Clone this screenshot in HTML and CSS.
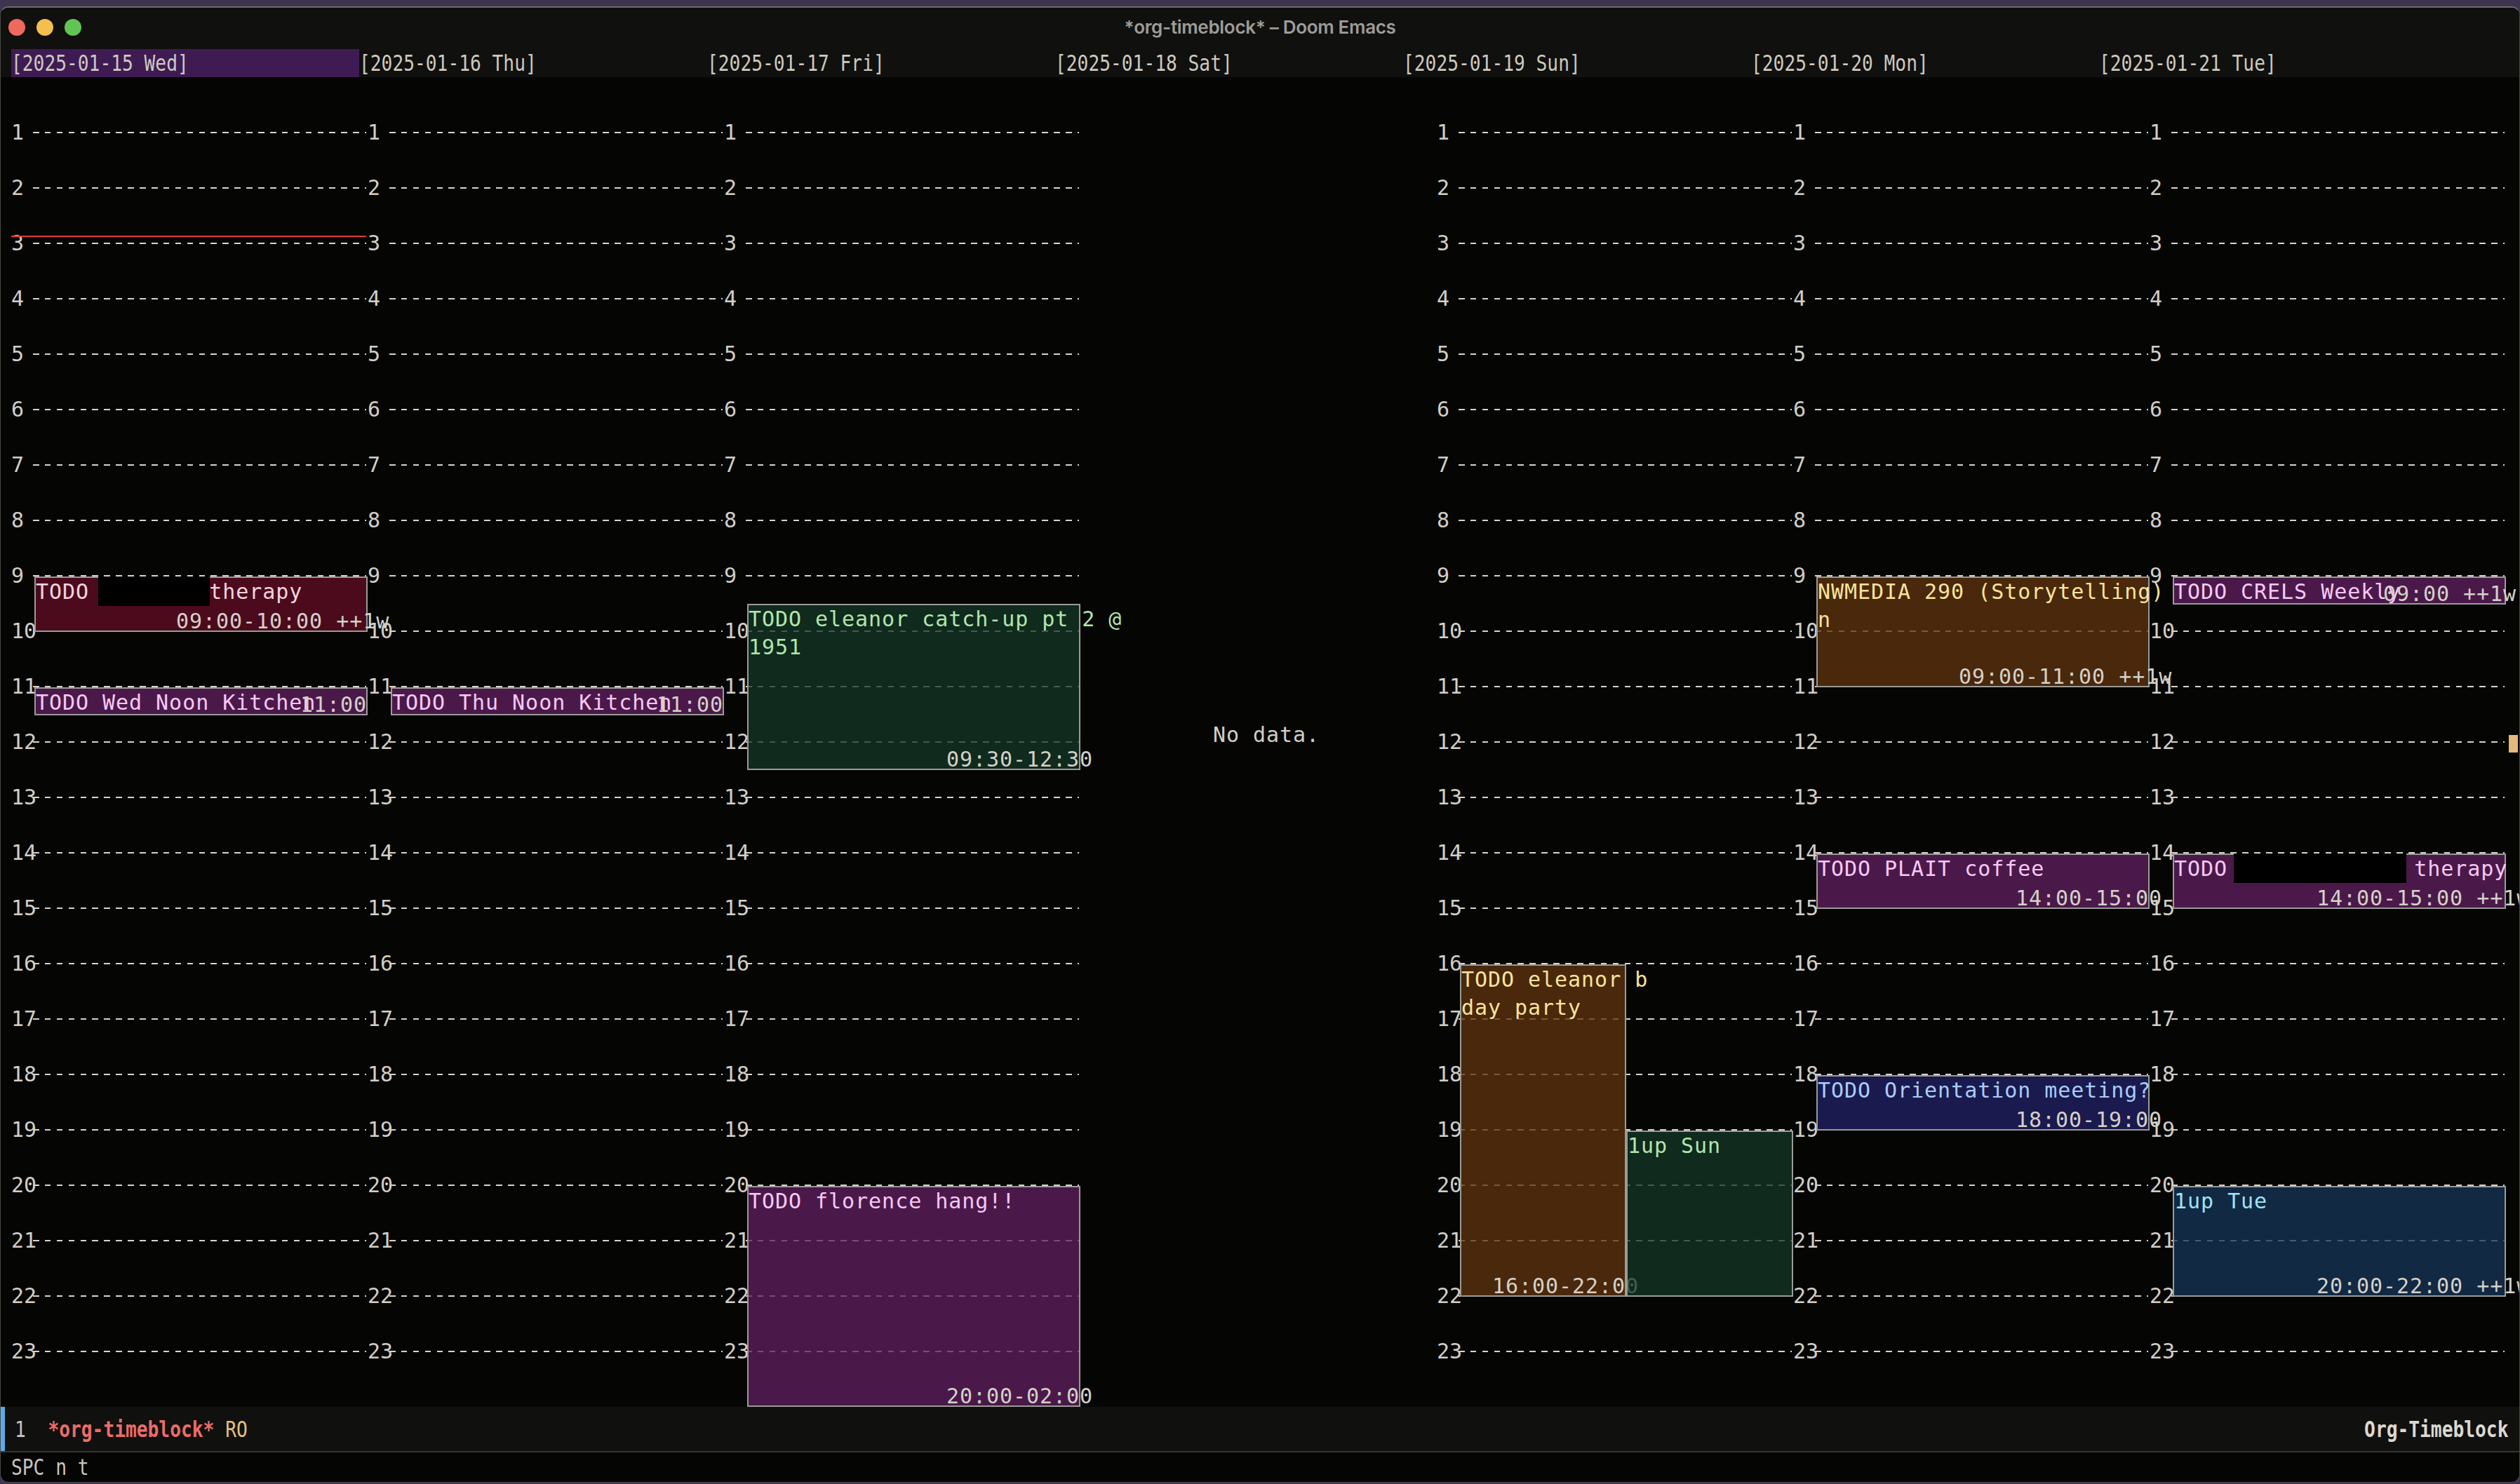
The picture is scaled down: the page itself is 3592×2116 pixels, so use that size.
FILE: index.html
```html
<!DOCTYPE html>
<html lang="en">
<head>
<meta charset="utf-8">
<title>*org-timeblock* – Doom Emacs</title>
<link rel="stylesheet" href="styles.css">
</head>
<body>
<div class="window">
  <div class="titlebar">
    <div class="lights"><span class="dot red"></span><span class="dot yellow"></span><span class="dot green"></span></div>
    <div class="title">*org-timeblock* – Doom Emacs</div>
    <div></div>
  </div>
  <div class="headerline">
    <div class="hd on"><span class="cx">[2025-01-15 Wed]</span></div>
    <div class="hd"><span class="cx">[2025-01-16 Thu]</span></div>
    <div class="hd"><span class="cx">[2025-01-17 Fri]</span></div>
    <div class="hd"><span class="cx">[2025-01-18 Sat]</span></div>
    <div class="hd"><span class="cx">[2025-01-19 Sun]</span></div>
    <div class="hd"><span class="cx">[2025-01-20 Mon]</span></div>
    <div class="hd"><span class="cx">[2025-01-21 Tue]</span></div>
  </div>
  <div class="timeblock">
    <section class="day">
      <div class="grid"><div class="hr"></div><div class="hr"><i>1</i></div><div class="hr"><i>2</i></div><div class="hr"><i>3</i></div><div class="hr"><i>4</i></div><div class="hr"><i>5</i></div><div class="hr"><i>6</i></div><div class="hr"><i>7</i></div><div class="hr"><i>8</i></div><div class="hr"><i>9</i></div><div class="hr"><i>10</i></div><div class="hr"><i>11</i></div><div class="hr"><i>12</i></div><div class="hr"><i>13</i></div><div class="hr"><i>14</i></div><div class="hr"><i>15</i></div><div class="hr"><i>16</i></div><div class="hr"><i>17</i></div><div class="hr"><i>18</i></div><div class="hr"><i>19</i></div><div class="hr"><i>20</i></div><div class="hr"><i>21</i></div><div class="hr"><i>22</i></div><div class="hr"><i>23</i></div></div>
      <div class="now"></div>
      <div class="ev crimson" style="top:712px;height:79px"><div class="ttl">TODO         therapy</div><span class="redact" style="left:89px;width:159px"></span><span class="tm" style="left:200px">09:00-10:00 ++1w</span></div>
      <div class="ev purple" style="top:870px;height:40px"><div class="ttl">TODO Wed Noon Kitchen</div><span class="tm" style="left:377px">11:00</span></div>
    </section>
    <section class="day">
      <div class="grid"><div class="hr"></div><div class="hr"><i>1</i></div><div class="hr"><i>2</i></div><div class="hr"><i>3</i></div><div class="hr"><i>4</i></div><div class="hr"><i>5</i></div><div class="hr"><i>6</i></div><div class="hr"><i>7</i></div><div class="hr"><i>8</i></div><div class="hr"><i>9</i></div><div class="hr"><i>10</i></div><div class="hr"><i>11</i></div><div class="hr"><i>12</i></div><div class="hr"><i>13</i></div><div class="hr"><i>14</i></div><div class="hr"><i>15</i></div><div class="hr"><i>16</i></div><div class="hr"><i>17</i></div><div class="hr"><i>18</i></div><div class="hr"><i>19</i></div><div class="hr"><i>20</i></div><div class="hr"><i>21</i></div><div class="hr"><i>22</i></div><div class="hr"><i>23</i></div></div>
      <div class="ev purple" style="top:870px;height:40px"><div class="ttl">TODO Thu Noon Kitchen</div><span class="tm" style="left:377px">11:00</span></div>
    </section>
    <section class="day">
      <div class="grid"><div class="hr"></div><div class="hr"><i>1</i></div><div class="hr"><i>2</i></div><div class="hr"><i>3</i></div><div class="hr"><i>4</i></div><div class="hr"><i>5</i></div><div class="hr"><i>6</i></div><div class="hr"><i>7</i></div><div class="hr"><i>8</i></div><div class="hr"><i>9</i></div><div class="hr"><i>10</i></div><div class="hr"><i>11</i></div><div class="hr"><i>12</i></div><div class="hr"><i>13</i></div><div class="hr"><i>14</i></div><div class="hr"><i>15</i></div><div class="hr"><i>16</i></div><div class="hr"><i>17</i></div><div class="hr"><i>18</i></div><div class="hr"><i>19</i></div><div class="hr"><i>20</i></div><div class="hr"><i>21</i></div><div class="hr"><i>22</i></div><div class="hr"><i>23</i></div></div>
      <div class="ev green" style="top:751px;height:237px"><div class="ttl">TODO eleanor catch-up pt 2 @<br>1951</div><span class="tm" style="left:282px">09:30-12:30</span></div>
      <div class="ev purple" style="top:1581px;height:315px"><div class="ttl">TODO florence hang!!</div><span class="tm" style="left:282px">20:00-02:00</span></div>
    </section>
    <section class="day empty">
      <p class="nodata">No data.</p>
    </section>
    <section class="day">
      <div class="grid"><div class="hr"></div><div class="hr"><i>1</i></div><div class="hr"><i>2</i></div><div class="hr"><i>3</i></div><div class="hr"><i>4</i></div><div class="hr"><i>5</i></div><div class="hr"><i>6</i></div><div class="hr"><i>7</i></div><div class="hr"><i>8</i></div><div class="hr"><i>9</i></div><div class="hr"><i>10</i></div><div class="hr"><i>11</i></div><div class="hr"><i>12</i></div><div class="hr"><i>13</i></div><div class="hr"><i>14</i></div><div class="hr"><i>15</i></div><div class="hr"><i>16</i></div><div class="hr"><i>17</i></div><div class="hr"><i>18</i></div><div class="hr"><i>19</i></div><div class="hr"><i>20</i></div><div class="hr"><i>21</i></div><div class="hr"><i>22</i></div><div class="hr"><i>23</i></div></div>
      <div class="ev brown half" style="top:1265px;height:474px"><div class="ttl">TODO eleanor b<br>day party</div><span class="tm" style="left:44px">16:00-22:00</span></div>
      <div class="ev green half right" style="top:1502px;height:237px"><div class="ttl">1up Sun</div></div>
    </section>
    <section class="day">
      <div class="grid"><div class="hr"></div><div class="hr"><i>1</i></div><div class="hr"><i>2</i></div><div class="hr"><i>3</i></div><div class="hr"><i>4</i></div><div class="hr"><i>5</i></div><div class="hr"><i>6</i></div><div class="hr"><i>7</i></div><div class="hr"><i>8</i></div><div class="hr"><i>9</i></div><div class="hr"><i>10</i></div><div class="hr"><i>11</i></div><div class="hr"><i>12</i></div><div class="hr"><i>13</i></div><div class="hr"><i>14</i></div><div class="hr"><i>15</i></div><div class="hr"><i>16</i></div><div class="hr"><i>17</i></div><div class="hr"><i>18</i></div><div class="hr"><i>19</i></div><div class="hr"><i>20</i></div><div class="hr"><i>21</i></div><div class="hr"><i>22</i></div><div class="hr"><i>23</i></div></div>
      <div class="ev brown" style="top:712px;height:158px"><div class="ttl">NWMEDIA 290 (Storytelling)<br>n</div><span class="tm" style="left:201px">09:00-11:00 ++1w</span></div>
      <div class="ev purple" style="top:1107px;height:79px"><div class="ttl">TODO PLAIT coffee</div><span class="tm" style="left:282px">14:00-15:00</span></div>
      <div class="ev navy" style="top:1423px;height:79px"><div class="ttl">TODO Orientation meeting?</div><span class="tm" style="left:282px">18:00-19:00</span></div>
    </section>
    <section class="day">
      <div class="grid"><div class="hr"></div><div class="hr"><i>1</i></div><div class="hr"><i>2</i></div><div class="hr"><i>3</i></div><div class="hr"><i>4</i></div><div class="hr"><i>5</i></div><div class="hr"><i>6</i></div><div class="hr"><i>7</i></div><div class="hr"><i>8</i></div><div class="hr"><i>9</i></div><div class="hr"><i>10</i></div><div class="hr"><i>11</i></div><div class="hr"><i>12</i></div><div class="hr"><i>13</i></div><div class="hr"><i>14</i></div><div class="hr"><i>15</i></div><div class="hr"><i>16</i></div><div class="hr"><i>17</i></div><div class="hr"><i>18</i></div><div class="hr"><i>19</i></div><div class="hr"><i>20</i></div><div class="hr"><i>21</i></div><div class="hr"><i>22</i></div><div class="hr"><i>23</i></div></div>
      <div class="ev purple" style="top:712px;height:40px"><div class="ttl">TODO CRELS Weekly</div><span class="tm" style="left:298px">09:00 ++1w</span></div>
      <div class="ev purple" style="top:1107px;height:79px"><div class="ttl">TODO              therapy</div><span class="redact" style="left:85px;width:246px"></span><span class="tm" style="left:203px">14:00-15:00 ++1w</span></div>
      <div class="ev blue" style="top:1581px;height:158px"><div class="ttl">1up Tue</div><span class="tm" style="left:203px">20:00-22:00 ++1w</span></div>
    </section>
    <span class="cursor"></span>
  </div>
  <div class="modeline">
    <span class="cx left">1  <b class="buf">*org-timeblock*</b> <span class="ro">RO</span></span>
    <span class="cx rightside"><b>Org-Timeblock</b></span>
  </div>
  <div class="minibuffer"><span class="cx">SPC n t</span></div>
</div>
</body>
</html>
```

FILE: styles.css
```css
html, body {
  margin: 0;
  padding: 0;
}
body {
  width: 3592px;
  height: 2116px;
  overflow: hidden;
  background: #3d3550;
}
.window {
  margin-top: 9px;
  width: 3592px;
  box-sizing: border-box;
  border: 1px solid #4a4a46;
  border-top: 2px solid #6c6c67;
  border-radius: 12px;
  background: #050503;
  overflow: hidden;
  display: flex;
  flex-direction: column;
}
.titlebar {
  height: 59px;
  background: #10100e;
  display: grid;
  grid-template-columns: 1fr auto 1fr;
  align-items: center;
  padding-bottom: 4px;
  box-sizing: border-box;
}
.lights {
  display: flex;
  gap: 16px;
  padding-left: 11px;
}
.dot {
  width: 24px;
  height: 24px;
  border-radius: 50%;
}
.red { background: #ee6a5f; }
.yellow { background: #f5bf4f; }
.green.dot { background: #61c554; }
.title {
  font-family: Inter, "Noto Sans", sans-serif;
  font-weight: 600;
  font-size: 26px;
  color: #9e9c97;
  letter-spacing: -0.3px;
}
.cx {
  display: inline-block;
  font-family: "DejaVu Sans Mono", monospace;
  font-size: 32px;
  white-space: pre;
  transform: scaleX(0.82);
  transform-origin: 0 50%;
}
.headerline {
  height: 40px;
  background: #10100e;
  display: flex;
  padding-left: 15px;
}
.hd {
  width: 496px;
  flex: none;
  display: flex;
  align-items: center;
  color: #cdc9bf;
}
.hd.on {
  background: #3f1b54;
}
.timeblock {
  height: 1896px;
  display: flex;
  padding-left: 15px;
  position: relative;
  font-family: "DejaVu Sans Mono", monospace;
  font-size: 30px;
  color: #d2cec6;
}
.day {
  width: 508px;
  flex: none;
  position: relative;
}
.hr {
  height: 79px;
  position: relative;
}
.hr + .hr::before {
  content: "";
  position: absolute;
  left: 31px;
  width: 475px;
  top: -1px;
  height: 2px;
  background: repeating-linear-gradient(90deg, #d6d4ce 0 8.5px, transparent 8.5px 16.9px);
}
.hr i {
  position: absolute;
  left: 0;
  top: -15px;
  line-height: 30px;
  font-style: normal;
  color: #d2cec6;
}
.now {
  position: absolute;
  left: 0;
  top: 226px;
  width: 506px;
  height: 2px;
  background: #df3b33;
}
.ev {
  position: absolute;
  left: 33px;
  width: 475px;
  box-sizing: border-box;
  border: 2px solid #9b9b97;
  letter-spacing: 0.95px;
  line-height: 39.5px;
  white-space: pre;
}
.ev.half { width: 237px; }
.ev.half.right { left: 270px; width: 238px; }
.ttl {
  margin-top: 0;
}
.tm {
  position: absolute;
  bottom: -4px;
  line-height: 34px;
  color: #d4d0c8;
}
.redact {
  position: absolute;
  top: -2px;
  height: 42px;
  background: #000;
}
.crimson { background: rgba(98, 12, 38, 0.76); color: #f2d4de; }
.purple { background: rgba(96, 32, 97, 0.76); color: #f6c8f4; }
.green { background: rgba(20, 54, 38, 0.76); color: #b0e6ac; }
.brown { background: rgba(94, 51, 14, 0.76); color: #f8e49a; }
.navy { background: rgba(33, 33, 103, 0.76); color: #a8ccf8; }
.blue { background: rgba(21, 52, 88, 0.76); color: #a0e2f2; }
.day.empty {
  display: flex;
  align-items: center;
  justify-content: center;
}
.nodata {
  margin: 0 0 22px 22px;
  letter-spacing: 0.95px;
  color: #d2cec6;
}
.cursor {
  position: absolute;
  right: 2px;
  top: 938px;
  width: 13px;
  height: 25px;
  background: #e6b97c;
}
.modeline {
  height: 63px;
  background: #10100e;
  border-left: 6px solid #5ea8e8;
  display: flex;
  align-items: center;
  justify-content: space-between;
  padding: 0 16px 0 14px;
  color: #c8c4bc;
}
.modeline .buf {
  color: #ec6c68;
}
.modeline .ro {
  color: #e2c07e;
}
.modeline .rightside {
  transform-origin: 100% 50%;
  color: #dcd8d0;
}
.minibuffer {
  height: 42px;
  border-top: 2px solid #37372f;
  display: flex;
  align-items: center;
  padding-left: 15px;
  color: #c8c4bc;
}
```
